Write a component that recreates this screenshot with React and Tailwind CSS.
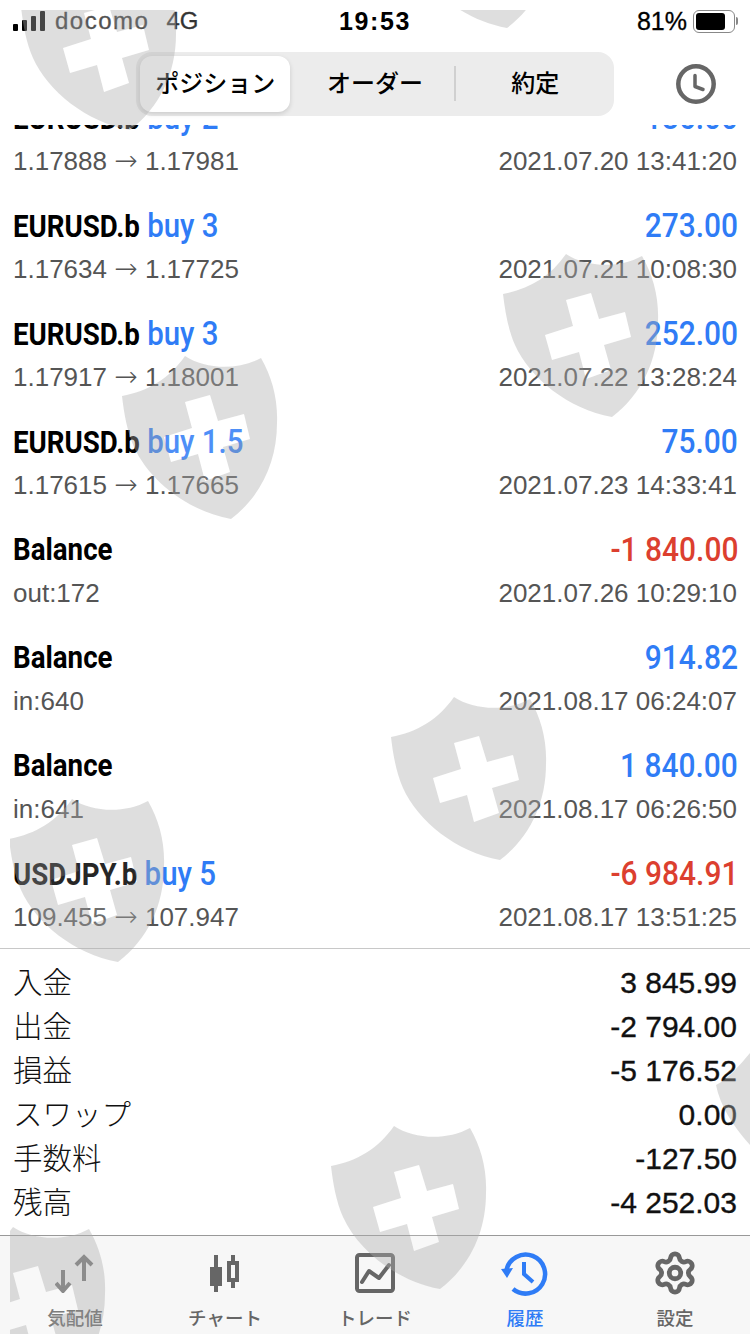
import React from "react";
import { Settings } from "lucide-react";

const rows = [
  { s: "EURUSD.b", t: "buy 2", a: "186.00", c: "blue", l: ["1.17888", "1.17981"], r: "2021.07.20 13:41:20" },
  { s: "EURUSD.b", t: "buy 3", a: "273.00", c: "blue", l: ["1.17634", "1.17725"], r: "2021.07.21 10:08:30" },
  { s: "EURUSD.b", t: "buy 3", a: "252.00", c: "blue", l: ["1.17917", "1.18001"], r: "2021.07.22 13:28:24" },
  { s: "EURUSD.b", t: "buy 1.5", a: "75.00", c: "blue", l: ["1.17615", "1.17665"], r: "2021.07.23 14:33:41" },
  { s: "Balance", t: "", a: "-1 840.00", c: "red", l: ["out:172"], r: "2021.07.26 10:29:10" },
  { s: "Balance", t: "", a: "914.82", c: "blue", l: ["in:640"], r: "2021.08.17 06:24:07" },
  { s: "Balance", t: "", a: "1 840.00", c: "blue", l: ["in:641"], r: "2021.08.17 06:26:50" },
  { s: "USDJPY.b", t: "buy 5", a: "-6 984.91", c: "red", l: ["109.455", "107.947"], r: "2021.08.17 13:51:25" },
];

const summary = [
  ["入金", "3 845.99"],
  ["出金", "-2 794.00"],
  ["損益", "-5 176.52"],
  ["スワップ", "0.00"],
  ["手数料", "-127.50"],
  ["残高", "-4 252.03"],
];

const shields = [
  "left-[11px] top-[-44px]",
  "left-[388px] top-[-146px]",
  "left-[112px] top-[345px]",
  "left-[493px] top-[243px]",
  "left-[381px] top-[686px]",
  "left-[-1px] top-[788px]",
  "left-[321px] top-[1115px]",
  "left-[-60px] top-[1216px]",
];

function Shield({ className }) {
  return (
    <svg className={"absolute " + className} width="156" height="166" viewBox="0 0 156 166">
      <path
        fillRule="evenodd"
        fill="#acacac"
        fillOpacity="0.4"
        d="M0 41C26 36 47 24 63 1C83 14 115 16 139 3C150 22 156 44 155 68C155 108 138 142 109 164C65 156 27 125 12 92C5 76 2 58 0 41ZM63 47L70 73L42 82L49 107L76 99L83 126L108 117L101 92L128 84L122 59L96 66L88 40Z"
      />
      <path fill="#ffffff" fillOpacity="0.15" d="M63 47L70 73L42 82L49 107L76 99L83 126L108 117L101 92L128 84L122 59L96 66L88 40Z" />
    </svg>
  );
}

function Row({ s, t, a, c, l, r }) {
  return (
    <div className="h-[108px] pt-[14px]">
      <div className="mr-[-1px] flex h-[44px] items-center justify-between whitespace-nowrap font-['Roboto',sans-serif] text-[32px] font-bold leading-none">
        <span className="inline-block origin-left scale-x-[.865] text-black">
          {s}
          {t && <span className="text-[34px] font-medium text-[#2f7cf6]"> {t}</span>}
        </span>
        <span className={"inline-block origin-right scale-x-[.88] text-[34px] font-medium " + (c === "red" ? "text-[#dc3f2f]" : "text-[#2f7cf6]")}>{a}</span>
      </div>
      <div className="mt-[3px] flex h-[38px] items-center justify-between text-[26px] leading-none text-[#555555]">
        <span>
          {l[0]}
          {l[1] && (
            <>
              {" "}
              <span className="font-['DejaVu_Sans',sans-serif] text-[28px] font-extralight">→</span> {l[1]}
            </>
          )}
        </span>
        <span>{r}</span>
      </div>
    </div>
  );
}

function Tab({ label, active, children }) {
  return (
    <div className="flex flex-col items-center">
      <div className="flex h-[48px] w-[48px] items-center justify-center">{children}</div>
      <div className={"mt-[10px] text-[18.5px] font-medium leading-[24px] " + (active ? "text-[#2f7cf6]" : "text-[#666666]")}>{label}</div>
    </div>
  );
}

export default function App() {
  return (
    <div className="relative flex h-[1334px] w-[750px] flex-col overflow-hidden bg-white font-['Liberation_Sans','Noto_Sans_CJK_JP',sans-serif] text-black">
      <header className="h-[125px] shrink-0">
        <div className="relative flex h-[42px] items-center justify-between pl-[13px] pr-[12px]">
          <div className="flex items-center text-[24px] leading-none text-[#333333] [-webkit-text-stroke:0.3px]">
            <div className="flex h-[20px] items-end gap-[4px]">
              <div className="h-[7px] w-[5px] rounded-[1px] bg-black"></div>
              <div className="h-[11px] w-[5px] rounded-[1px] bg-black"></div>
              <div className="h-[15px] w-[5px] rounded-[1px] bg-black"></div>
              <div className="h-[20px] w-[5px] rounded-[1px] bg-black"></div>
            </div>
            <span className="ml-[10px] tracking-[1.5px]">docomo</span>
            <span className="ml-[17px]">4G</span>
          </div>
          <div className="absolute left-[339px] top-[9px] text-[25px] font-bold leading-[24px] tracking-[1.6px]">19:53</div>
          <div className="flex items-center">
            <span className="text-[25px] leading-none [-webkit-text-stroke:0.3px]">81%</span>
            <div className="ml-[6px] flex h-[23px] w-[42px] items-center rounded-[6px] border-[1.5px] border-[#888888] p-[2px]">
              <div className="h-full w-[29px] rounded-[3px] bg-black"></div>
            </div>
            <div className="ml-[1px] h-[8px] w-[2px] rounded-r-[2px] bg-[#888888]"></div>
          </div>
        </div>
        <div className="mt-[10px] flex items-center pl-[136px]">
          <div className="grid h-[64px] w-[478px] grid-cols-3 rounded-[16px] bg-[#ececec] text-[24px] font-medium">
            <div className="m-[4px] mr-[5px] flex items-center justify-center rounded-[12px] bg-white shadow-[0_2px_5px_rgba(0,0,0,0.14)]">ポジション</div>
            <div className="relative flex items-center justify-center">
              オーダー
              <div className="absolute right-[-1px] top-[14px] h-[35px] w-[2px] bg-[#d0d0d0]"></div>
            </div>
            <div className="flex items-center justify-center pl-[2px]">約定</div>
          </div>
          <svg className="ml-[60px]" width="44" height="44" viewBox="0 0 44 44" fill="none" stroke="#666666" strokeWidth="4.5" strokeLinecap="round" strokeLinejoin="round">
            <circle cx="22" cy="22" r="17.7" />
            <path d="M21 13.5V24.5L29 27.5" strokeWidth="3.5" />
          </svg>
        </div>
      </header>

      <main className="min-h-0 flex-1 overflow-hidden px-[13px]">
        <div className="mt-[-44px]">
          {rows.map((row, i) => (
            <Row key={i} {...row} />
          ))}
        </div>
      </main>

      <section className="h-[287px] shrink-0 border-t border-[#c8c8c8] px-[13px] pt-[12px]">
        {summary.map(([k, v]) => (
          <div key={k} className="flex h-[44px] items-center justify-between">
            <span className="text-[29.5px] font-light leading-none text-[#111111]">{k}</span>
            <span className="text-[30px] leading-none text-[#111111] [-webkit-text-stroke:0.35px]">{v}</span>
          </div>
        ))}
      </section>

      <nav className="grid h-[99px] shrink-0 grid-cols-5 border-t border-[#999999] bg-[#f7f7f7] pt-[13px]">
        <Tab label="気配値">
          <svg width="40" height="40" viewBox="0 0 40 40" fill="none" stroke="#777777" strokeWidth="4">
            <path d="M8 17V38M1 30L8 38L15 30" />
            <path d="M29 4V28M21 12L29 4L37 12" />
          </svg>
        </Tab>
        <Tab label="チャート">
          <svg width="40" height="40" viewBox="0 0 40 40" fill="none" stroke="#666666">
            <path d="M11 2V39" strokeWidth="4" />
            <rect x="5" y="14" width="12" height="19" fill="#666666" strokeWidth="0" />
            <path d="M28 2V35" strokeWidth="4" />
            <rect x="24" y="10" width="8" height="17" fill="#f7f7f7" strokeWidth="4" />
          </svg>
        </Tab>
        <Tab label="トレード">
          <svg width="40" height="40" viewBox="0 0 40 40" fill="none" stroke="#666666" strokeWidth="4" strokeLinejoin="round">
            <rect x="2" y="2" width="36" height="36" rx="2.5" />
            <path d="M7 29L14 18L24 25L34 12" strokeLinecap="round" />
          </svg>
        </Tab>
        <Tab label="履歴" active>
          <svg width="48" height="48" viewBox="0 0 48 48" fill="none" stroke="#2f7cf6" strokeWidth="4.5">
            <path d="M5.5 21A19.5 19.5 0 1 1 12 40" />
            <path d="M0 20L12 19L6 29Z" fill="#2f7cf6" stroke="none" />
            <path d="M23 13V25L32 33" strokeWidth="4" />
          </svg>
        </Tab>
        <Tab label="設定">
          <Settings size={46} color="#666666" strokeWidth={2.5} />
        </Tab>
      </nav>

      <div className="pointer-events-none absolute bottom-0 left-[10px] right-0 top-[10px] overflow-hidden">
        {shields.map((c) => (
          <Shield key={c} className={c} />
        ))}
        <svg className="absolute left-[706px] top-[1043px]" width="34" height="92" viewBox="0 0 34 92">
          <path fill="#acacac" fillOpacity="0.4" d="M0 32C12 26 24 12 34 0V92C16 72 4 52 0 32Z" />
        </svg>
      </div>
    </div>
  );
}
